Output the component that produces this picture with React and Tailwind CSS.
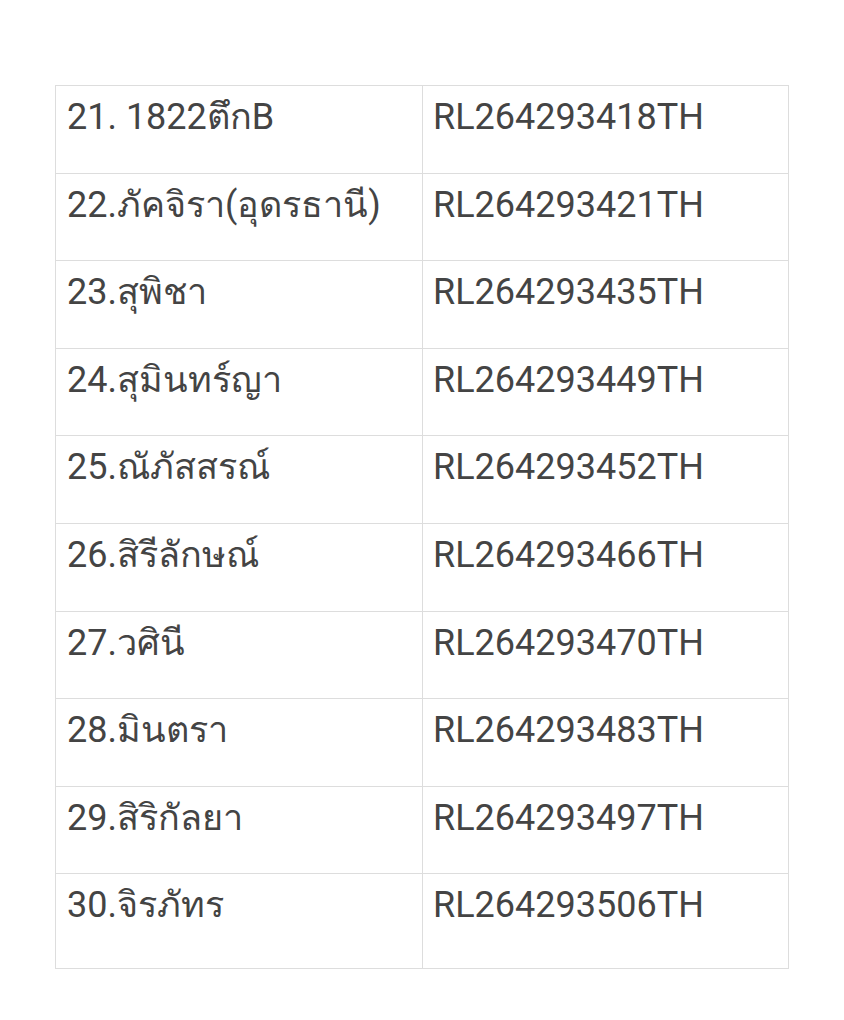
import React from 'react';

const ROWS = [
  ['21. 1822ตึกB', 'RL264293418TH'],
  ['22.ภัคจิรา(อุดรธานี)', 'RL264293421TH'],
  ['23.สุพิชา', 'RL264293435TH'],
  ['24.สุมินทร์ญา', 'RL264293449TH'],
  ['25.ณัภัสสรณ์', 'RL264293452TH'],
  ['26.สิรีลักษณ์', 'RL264293466TH'],
  ['27.วศินี', 'RL264293470TH'],
  ['28.มินตรา', 'RL264293483TH'],
  ['29.สิริกัลยา', 'RL264293497TH'],
  ['30.จิรภัทร', 'RL264293506TH'],
];

export default function App() {
  return (
    <div className="min-h-[1020px] w-[844px] bg-white pt-[85px] pl-[55px]" style={{ fontFamily: 'Roboto, "Noto Sans", sans-serif' }}>
      <table className="w-[734px] table-fixed border-collapse text-[36px] leading-[40px] text-[#444444]">
        <tbody>
          {ROWS.map(([name, code], i) => (
            <tr key={i} className={i === ROWS.length - 1 ? 'h-[95px]' : 'h-[87.6px]'}>
              <td className="w-[367px] border border-[#dddddd] pl-[11px] pt-[11px] align-top whitespace-nowrap">{name}</td>
              <td className="border border-[#dddddd] pl-[10px] pt-[11px] align-top whitespace-nowrap">{code}</td>
            </tr>
          ))}
        </tbody>
      </table>
    </div>
  );
}
